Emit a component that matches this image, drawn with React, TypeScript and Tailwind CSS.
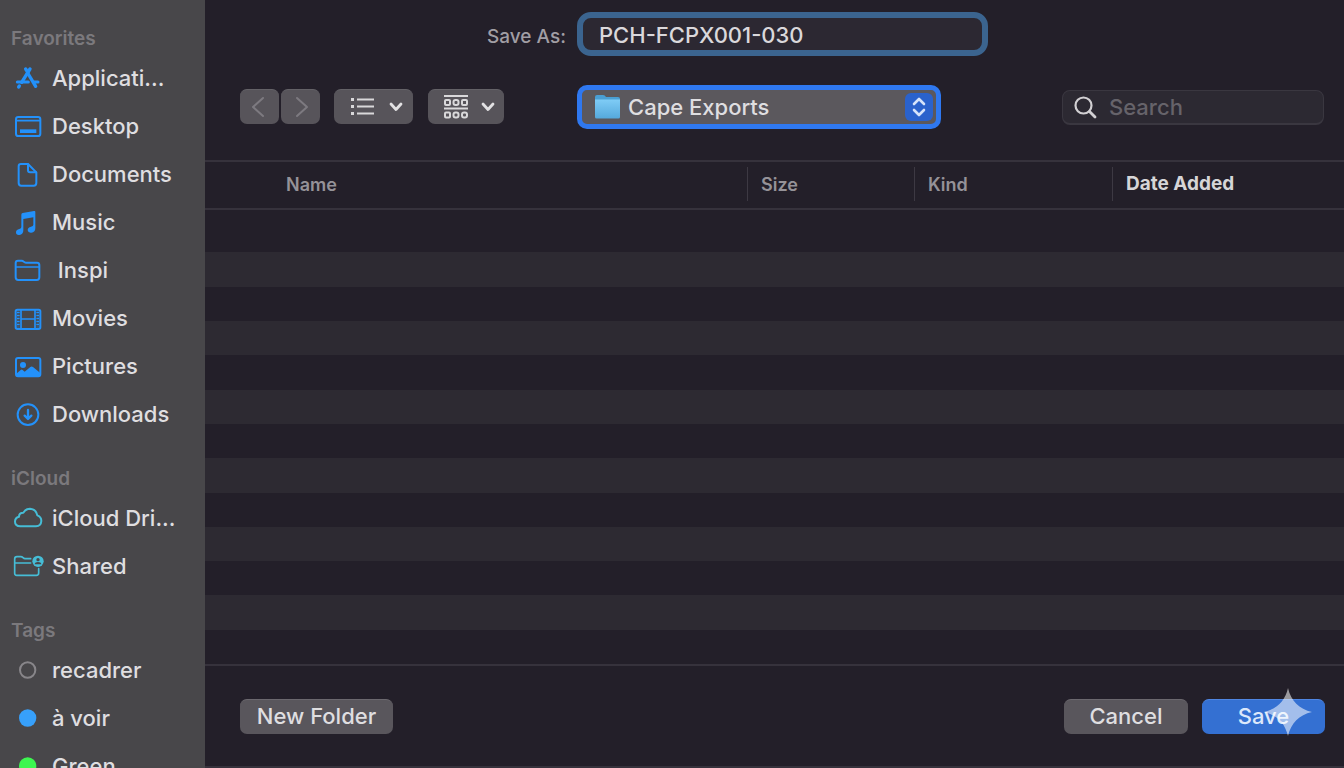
import type { ReactNode } from "react";

function SideIcon({ children }: { children: ReactNode }) {
  return (
    <svg
      viewBox="0 0 96 84"
      className="h-7 w-8 shrink-0"
      fill="none"
      stroke="currentColor"
      strokeWidth="6"
      strokeLinecap="round"
      strokeLinejoin="round"
      aria-hidden="true"
    >
      {children}
    </svg>
  );
}

const blue = "text-[#2391fa]";
const teal = "text-[#46bdd6]";

const icons = {
  apps: (
    <SideIcon>
      <g strokeWidth="10">
        <path d="M41 15 L48 26" />
        <path d="M54 15 L29 55" />
        <path d="M20 69 L22 66" />
        <path d="M47 27 L71 67" />
        <path d="M16 54 H49" strokeWidth="9" />
        <path d="M66 54 H78" strokeWidth="9" />
      </g>
    </SideIcon>
  ),
  desktop: (
    <SideIcon>
      <rect x="12" y="15" width="73" height="57" rx="7" />
      <path d="M12 26 H84" strokeWidth="5" />
      <rect x="24" y="52" width="49" height="11" fill="currentColor" stroke="none" />
    </SideIcon>
  ),
  document: (
    <SideIcon>
      <path d="M27 12 H48 L73 37 V69 Q73 77 65 77 H28 Q20 77 20 69 V19 Q20 12 27 12 Z" />
      <path d="M48 13 V31 Q48 37 54 37 H72" />
    </SideIcon>
  ),
  music: (
    <SideIcon>
      <g fill="currentColor" stroke="none">
        <path d="M28 20 Q28 16 32 15 L66 9 Q70 8 70 12 V60 Q70 73 58 74 Q48 75 47 67 Q47 58 57 56 Q64 55 64 50 V28 L34 33 V66 Q34 80 22 81 Q12 82 12 73 Q12 65 22 63 Q28 62 28 57 Z" />
      </g>
    </SideIcon>
  ),
  folder: (
    <SideIcon>
      <path d="M11 64 V21 Q11 14 18 14 H29 Q32 14 35 17 Q38 20 42 20 H75 Q82 20 82 27 V64 Q82 72 74 72 H19 Q11 72 11 64 Z" />
      <path d="M12 33 H82" strokeWidth="5" />
    </SideIcon>
  ),
  movie: (
    <SideIcon>
      <rect x="11" y="17" width="74" height="58" rx="5" />
      <path d="M27 18 V74 M69 18 V74 M27 45 H69" strokeWidth="5" />
      <path d="M19 23 V70 M77 23 V70" strokeWidth="8" strokeDasharray="5 4" strokeLinecap="butt" />
    </SideIcon>
  ),
  picture: (
    <SideIcon>
      <rect x="12" y="18" width="73" height="55" rx="6" />
      <circle cx="33" cy="39" r="9" fill="currentColor" stroke="none" />
      <path
        d="M12 66 L26 54 Q29 51 32 54 L38 59 L55 45 Q59 42 63 45 L84 62 V73 H12 Z"
        fill="currentColor"
        stroke="none"
      />
    </SideIcon>
  ),
  download: (
    <SideIcon>
      <circle cx="48" cy="44" r="31" />
      <path d="M48 30 V57 M38 47 L48 57 L58 47" strokeWidth="7" />
    </SideIcon>
  ),
  cloud: (
    <SideIcon>
      <path d="M25 67 Q9 66 9 53 Q9 41 21 38 Q21 26 34 26 Q41 14 54 14 Q72 15 76 34 Q88 38 88 51 Q87 66 72 67 Z" />
    </SideIcon>
  ),
  shared: (
    <SideIcon>
      <g strokeWidth="5">
        <path d="M56 20 H39 Q36 20 33 17 Q30 14 26 14 H15 Q8 14 8 21 V64 Q8 70 14 70 H73 Q80 70 80 63 V50" />
        <path d="M9 33 H56" />
      </g>
      <circle cx="78" cy="28" r="17" fill="currentColor" stroke="none" />
      <circle cx="78" cy="23" r="5" fill="#48474a" stroke="none" />
      <path d="M68 37 Q69 30 78 30 Q87 30 88 37 Z" fill="#48474a" stroke="none" />
    </SideIcon>
  ),
  ring: (
    <SideIcon>
      <circle cx="47" cy="42" r="23" />
    </SideIcon>
  ),
  dot: (
    <SideIcon>
      <circle cx="47" cy="42" r="26" fill="currentColor" stroke="none" />
    </SideIcon>
  ),
};

const sections = [
  {
    title: "Favorites",
    items: [
      { label: "Applicati...", icon: icons.apps, color: blue },
      { label: "Desktop", icon: icons.desktop, color: blue },
      { label: "Documents", icon: icons.document, color: blue },
      { label: "Music", icon: icons.music, color: blue },
      { label: "\u00a0Inspi", icon: icons.folder, color: blue },
      { label: "Movies", icon: icons.movie, color: blue },
      { label: "Pictures", icon: icons.picture, color: blue },
      { label: "Downloads", icon: icons.download, color: blue },
    ],
  },
  {
    title: "iCloud",
    items: [
      { label: "iCloud Dri...", icon: icons.cloud, color: teal },
      { label: "Shared", icon: icons.shared, color: teal },
    ],
  },
  {
    title: "Tags",
    items: [
      { label: "recadrer", icon: icons.ring, color: "text-[#88868a]" },
      { label: "à voir", icon: icons.dot, color: "text-[#37a0fb]" },
      { label: "Green", icon: icons.dot, color: "text-[#3df650]" },
    ],
  },
];

function Sidebar() {
  return (
    <nav className="flex w-[205px] shrink-0 flex-col gap-6 overflow-hidden bg-[#48474a] pt-[22px]">
      {sections.map((section) => (
        <section key={section.title} className="shrink-0">
          <h2 className="flex h-8 items-center pt-0.5 pl-[11px] text-[19px] font-semibold text-[#7b797d]">
            {section.title}
          </h2>
          <ul>
            {section.items.map((item) => (
              <li key={item.label}>
                <a href="#" className="flex h-12 items-center gap-2 pl-3 whitespace-nowrap">
                  <span className={item.color}>{item.icon}</span>
                  <span className="text-[22px] font-medium text-[#dfdee0]">{item.label}</span>
                </a>
              </li>
            ))}
          </ul>
        </section>
      ))}
    </nav>
  );
}

function Chevron() {
  return (
    <svg viewBox="0 0 14 10" className="h-[10px] w-[14px]" fill="none" stroke="#e2e1e3" strokeWidth="2.800" strokeLinecap="round" strokeLinejoin="round">
      <path d="M2 2 L7 7.500 L12 2" />
    </svg>
  );
}

const toolButton =
  "flex h-[35px] items-center justify-center rounded-[7px] border-t border-[#646267] bg-[#57545a]";

function Toolbar() {
  return (
    <div className="flex items-center pb-0.5">
      <button type="button" aria-label="Back" className={`${toolButton} w-[39px] pr-1`}>
        <svg viewBox="0 0 14 22" className="h-[22px] w-[14px]" fill="none" stroke="#7d7a80" strokeWidth="2" strokeLinecap="round" strokeLinejoin="round">
          <path d="M12 2 L2 11 L12 20" />
        </svg>
      </button>
      <button type="button" aria-label="Forward" className={`${toolButton} ml-0.5 w-[39px] pl-0.5`}>
        <svg viewBox="0 0 14 22" className="h-[22px] w-[14px]" fill="none" stroke="#7d7a80" strokeWidth="2" strokeLinecap="round" strokeLinejoin="round">
          <path d="M2 2 L12 11 L2 20" />
        </svg>
      </button>
      <button type="button" aria-label="List view" className={`${toolButton} ml-[14px] w-[79px] gap-[14px] pl-1.5`}>
        <svg viewBox="0 0 24 18" className="h-[18px] w-6" fill="#d9d8da">
          <path d="M0 0h3v3H0zM0 7h3v3H0zM0 14h3v3H0zM6 .500h17v2H6zM6 7.500h17v2H6zM6 14.500h17v2H6z" />
        </svg>
        <Chevron />
      </button>
      <button type="button" aria-label="Group items" className={`${toolButton} ml-[15px] w-[76px] gap-[12px] pl-1.5`}>
        <svg viewBox="0 0 25 26" className="h-[26px] w-[25px]" fill="none" stroke="#d9d8da" strokeWidth="2">
          <path d="M0 2 H24 M0 14.500 H24" />
          <rect x="1" y="6" width="5" height="5" rx="1" />
          <rect x="9.500" y="6" width="5" height="5" rx="2" />
          <rect x="18" y="6" width="5" height="5" rx="1" />
          <rect x="1" y="18.500" width="5" height="5" rx="1" />
          <rect x="9.500" y="18.500" width="5" height="5" rx="2" />
          <rect x="18" y="18.500" width="5" height="5" rx="2" />
        </svg>
        <Chevron />
      </button>
    </div>
  );
}

function LocationSelect() {
  return (
    <div className="relative w-[364px]">
      <select
        aria-label="Location"
        className="block h-11 w-full appearance-none rounded-[10px] border-[5px] border-[#2f78f0] bg-[#5b585d] pr-12 pl-[46px] text-[22px] font-medium text-[#dfdee0] outline-none"
      >
        <option>Cape Exports</option>
      </select>
      <svg viewBox="0 0 26 24" className="pointer-events-none absolute top-[10px] left-[18px] h-6 w-[26px]">
        <defs>
          <linearGradient id="folder-front" x1="0" y1="0" x2="0" y2="1">
            <stop offset="0" stopColor="#7fccf6" />
            <stop offset="1" stopColor="#55a9dc" />
          </linearGradient>
        </defs>
        <path d="M0 2 Q0 0 2 0 H8 Q10 0 11 2 H23 Q25 2 25 4 V8 H0 Z" fill="#4a9fd4" />
        <path d="M0 4.500 H25 V22 Q25 23.500 23.500 23.500 H1.500 Q0 23.500 0 22 Z" fill="url(#folder-front)" />
      </svg>
      <span className="pointer-events-none absolute top-2 right-2 flex h-7 w-7 items-center justify-center rounded-md bg-[#2a62cc]">
        <svg viewBox="0 0 14 20" className="h-5 w-[14px]" fill="none" stroke="#d5e3fa" strokeWidth="2.600" strokeLinecap="round" strokeLinejoin="round">
          <path d="M2 7 L7 2 L12 7 M2 13 L7 18 L12 13" />
        </svg>
      </span>
    </div>
  );
}

const cell = "flex h-[34px] items-center border-l border-[#3d3943] pl-[13px] text-left text-[18px] font-semibold";
const rows = Array.from({ length: 13 }, (_, i) => i);

function FileTable() {
  return (
    <table className="flex min-h-0 flex-1 flex-col border-y-2 border-[#36323c]">
      <thead className="block border-b-2 border-[#36323c]">
        <tr className="flex h-[46px] items-center pb-0.5 text-[#959298]">
          <th className="min-w-0 flex-1 pl-[81px] text-left text-[18px] font-semibold">Name</th>
          <th className={`${cell} w-[167px]`}>Size</th>
          <th className={`${cell} w-[198px]`}>Kind</th>
          <th className={`${cell} w-[232px]`}>
            <span className="text-[19px] font-bold text-[#d6d5d7]">Date Added</span>
          </th>
        </tr>
      </thead>
      <tbody className="flex min-h-0 flex-1 flex-col pt-2">
        {rows.map((i) => (
          <tr key={i} className="flex flex-1 odd:bg-[#231f29] even:bg-[#2d2a32]">
            <td className="flex-1" />
          </tr>
        ))}
      </tbody>
    </table>
  );
}

const pushButton = "h-[35px] rounded-[7px] border-t pb-0.5 text-[22px] leading-8 font-medium";

export default function App() {
  return (
    <div className="flex h-screen overflow-hidden bg-[#231f29] font-['Inter','Liberation_Sans',sans-serif]">
      <Sidebar />
      <main className="flex min-w-0 flex-1 flex-col border-b-2 border-[#36323c]">
        <div className="grid grid-cols-[337px_1fr] gap-y-[29px] pt-3 pr-5 pb-[31px] pl-[35px]">
          <label htmlFor="save-as" className="self-center pt-1.5 pr-[11px] text-right text-[19px] font-medium text-[#a19ea4]">
            Save As:
          </label>
          <input
            id="save-as"
            defaultValue="PCH-FCPX001-030"
            className="h-11 w-[411px] rounded-[14px] border-[6px] border-[#3b648f] bg-[#2c2832] pt-0.5 pl-4 text-[22px] font-medium text-[#dad8db] outline-none"
          />
          <Toolbar />
          <div className="flex items-center justify-between">
            <LocationSelect />
            <label className="flex h-[35px] w-[262px] items-center gap-3 rounded-lg border border-b-2 border-[#3a3740] bg-[#2c2932] pl-[10px]">
              <svg viewBox="0 0 24 24" className="h-6 w-6 shrink-0" fill="none" stroke="#d2d0d3" strokeWidth="2.200" strokeLinecap="round">
                <circle cx="10.500" cy="10.500" r="8" />
                <path d="M16.500 16.500 L22 22" strokeWidth="2.800" />
              </svg>
              <input
                type="search"
                aria-label="Search"
                placeholder="Search"
                className="w-full min-w-0 bg-transparent pt-0.5 text-[22px] font-medium text-[#dfdee0] outline-none placeholder:text-[#66636a]"
              />
            </label>
          </div>
        </div>
        <FileTable />
        <footer className="relative flex h-[100px] shrink-0 items-start pt-[33px] pr-[19px] pl-[35px]">
          <button type="button" className={`${pushButton} w-[153px] border-[#6b686e] bg-[#59565c] text-[#dfdee0]`}>
            New Folder
          </button>
          <button type="button" className={`${pushButton} ml-auto w-[124px] border-[#6b686e] bg-[#59565c] text-[#dfdee0]`}>
            Cancel
          </button>
          <button type="button" className={`${pushButton} ml-[14px] w-[123px] border-[#4f86e2] bg-[#3470d2] text-[#dce8fb]`}>
            Save
          </button>
          <svg viewBox="0 0 48 48" className="pointer-events-none absolute top-[22px] right-8 h-12 w-12" fill="#ffffff" fillOpacity="0.55">
            <path d="M24 0 C27 13 35 21 48 24 C35 27 27 35 24 48 C21 35 13 27 0 24 C13 21 21 13 24 0 Z" />
          </svg>
        </footer>
      </main>
    </div>
  );
}
